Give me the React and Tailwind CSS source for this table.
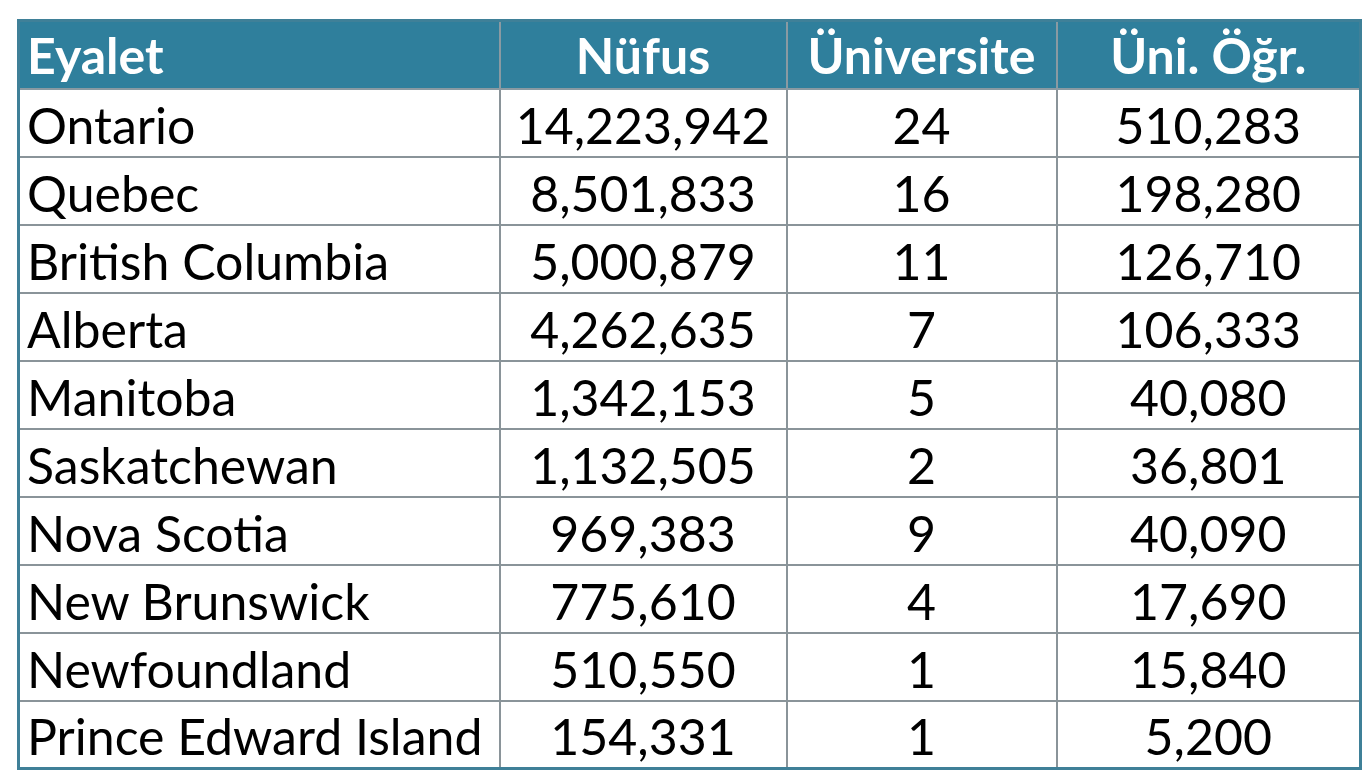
const rows = [
  ['Ontario', '14,223,942', '24', '510,283'],
  ['Quebec', '8,501,833', '16', '198,280'],
  ['British Columbia', '5,000,879', '11', '126,710'],
  ['Alberta', '4,262,635', '7', '106,333'],
  ['Manitoba', '1,342,153', '5', '40,080'],
  ['Saskatchewan', '1,132,505', '2', '36,801'],
  ['Nova Scotia', '969,383', '9', '40,090'],
  ['New Brunswick', '775,610', '4', '17,690'],
  ['Newfoundland', '510,550', '1', '15,840'],
  ['Prince Edward Island', '154,331', '1', '5,200'],
];

export default function App() {
  return (
    <div className="w-[1369px] h-[784px] bg-white pt-[19px] pl-[17px]" style={{ fontFamily: 'Lato, "Open Sans", sans-serif' }}>
      <table className="border-collapse border-[3px] border-[#3f8098] text-[50px] leading-none text-black">
        <colgroup>
          <col className="w-[481px]" />
          <col className="w-[287px]" />
          <col className="w-[270px]" />
          <col className="w-[304px]" />
        </colgroup>
        <thead>
          <tr className="h-[68px] bg-[#2f7f9c] text-white font-bold">
            <th className="border-2 border-[#8a9aa2] text-left pl-[7px]">Eyalet</th>
            <th className="border-2 border-[#8a9aa2] text-center">Nüfus</th>
            <th className="border-2 border-[#8a9aa2] text-center">Üniversite</th>
            <th className="border-2 border-[#8a9aa2] text-center">Üni. Öğr.</th>
          </tr>
        </thead>
        <tbody>
          {rows.map((r) => (
            <tr key={r[0]} className="h-[68px]">
              <td className="border-2 border-[#8a9499] pl-[7px] pt-[4px]">{r[0]}</td>
              <td className="border-2 border-[#8a9499] text-center pt-[4px]">{r[1]}</td>
              <td className="border-2 border-[#8a9499] text-center pt-[4px]">{r[2]}</td>
              <td className="border-2 border-[#8a9499] text-center pt-[4px]">{r[3]}</td>
            </tr>
          ))}
        </tbody>
      </table>
    </div>
  );
}
